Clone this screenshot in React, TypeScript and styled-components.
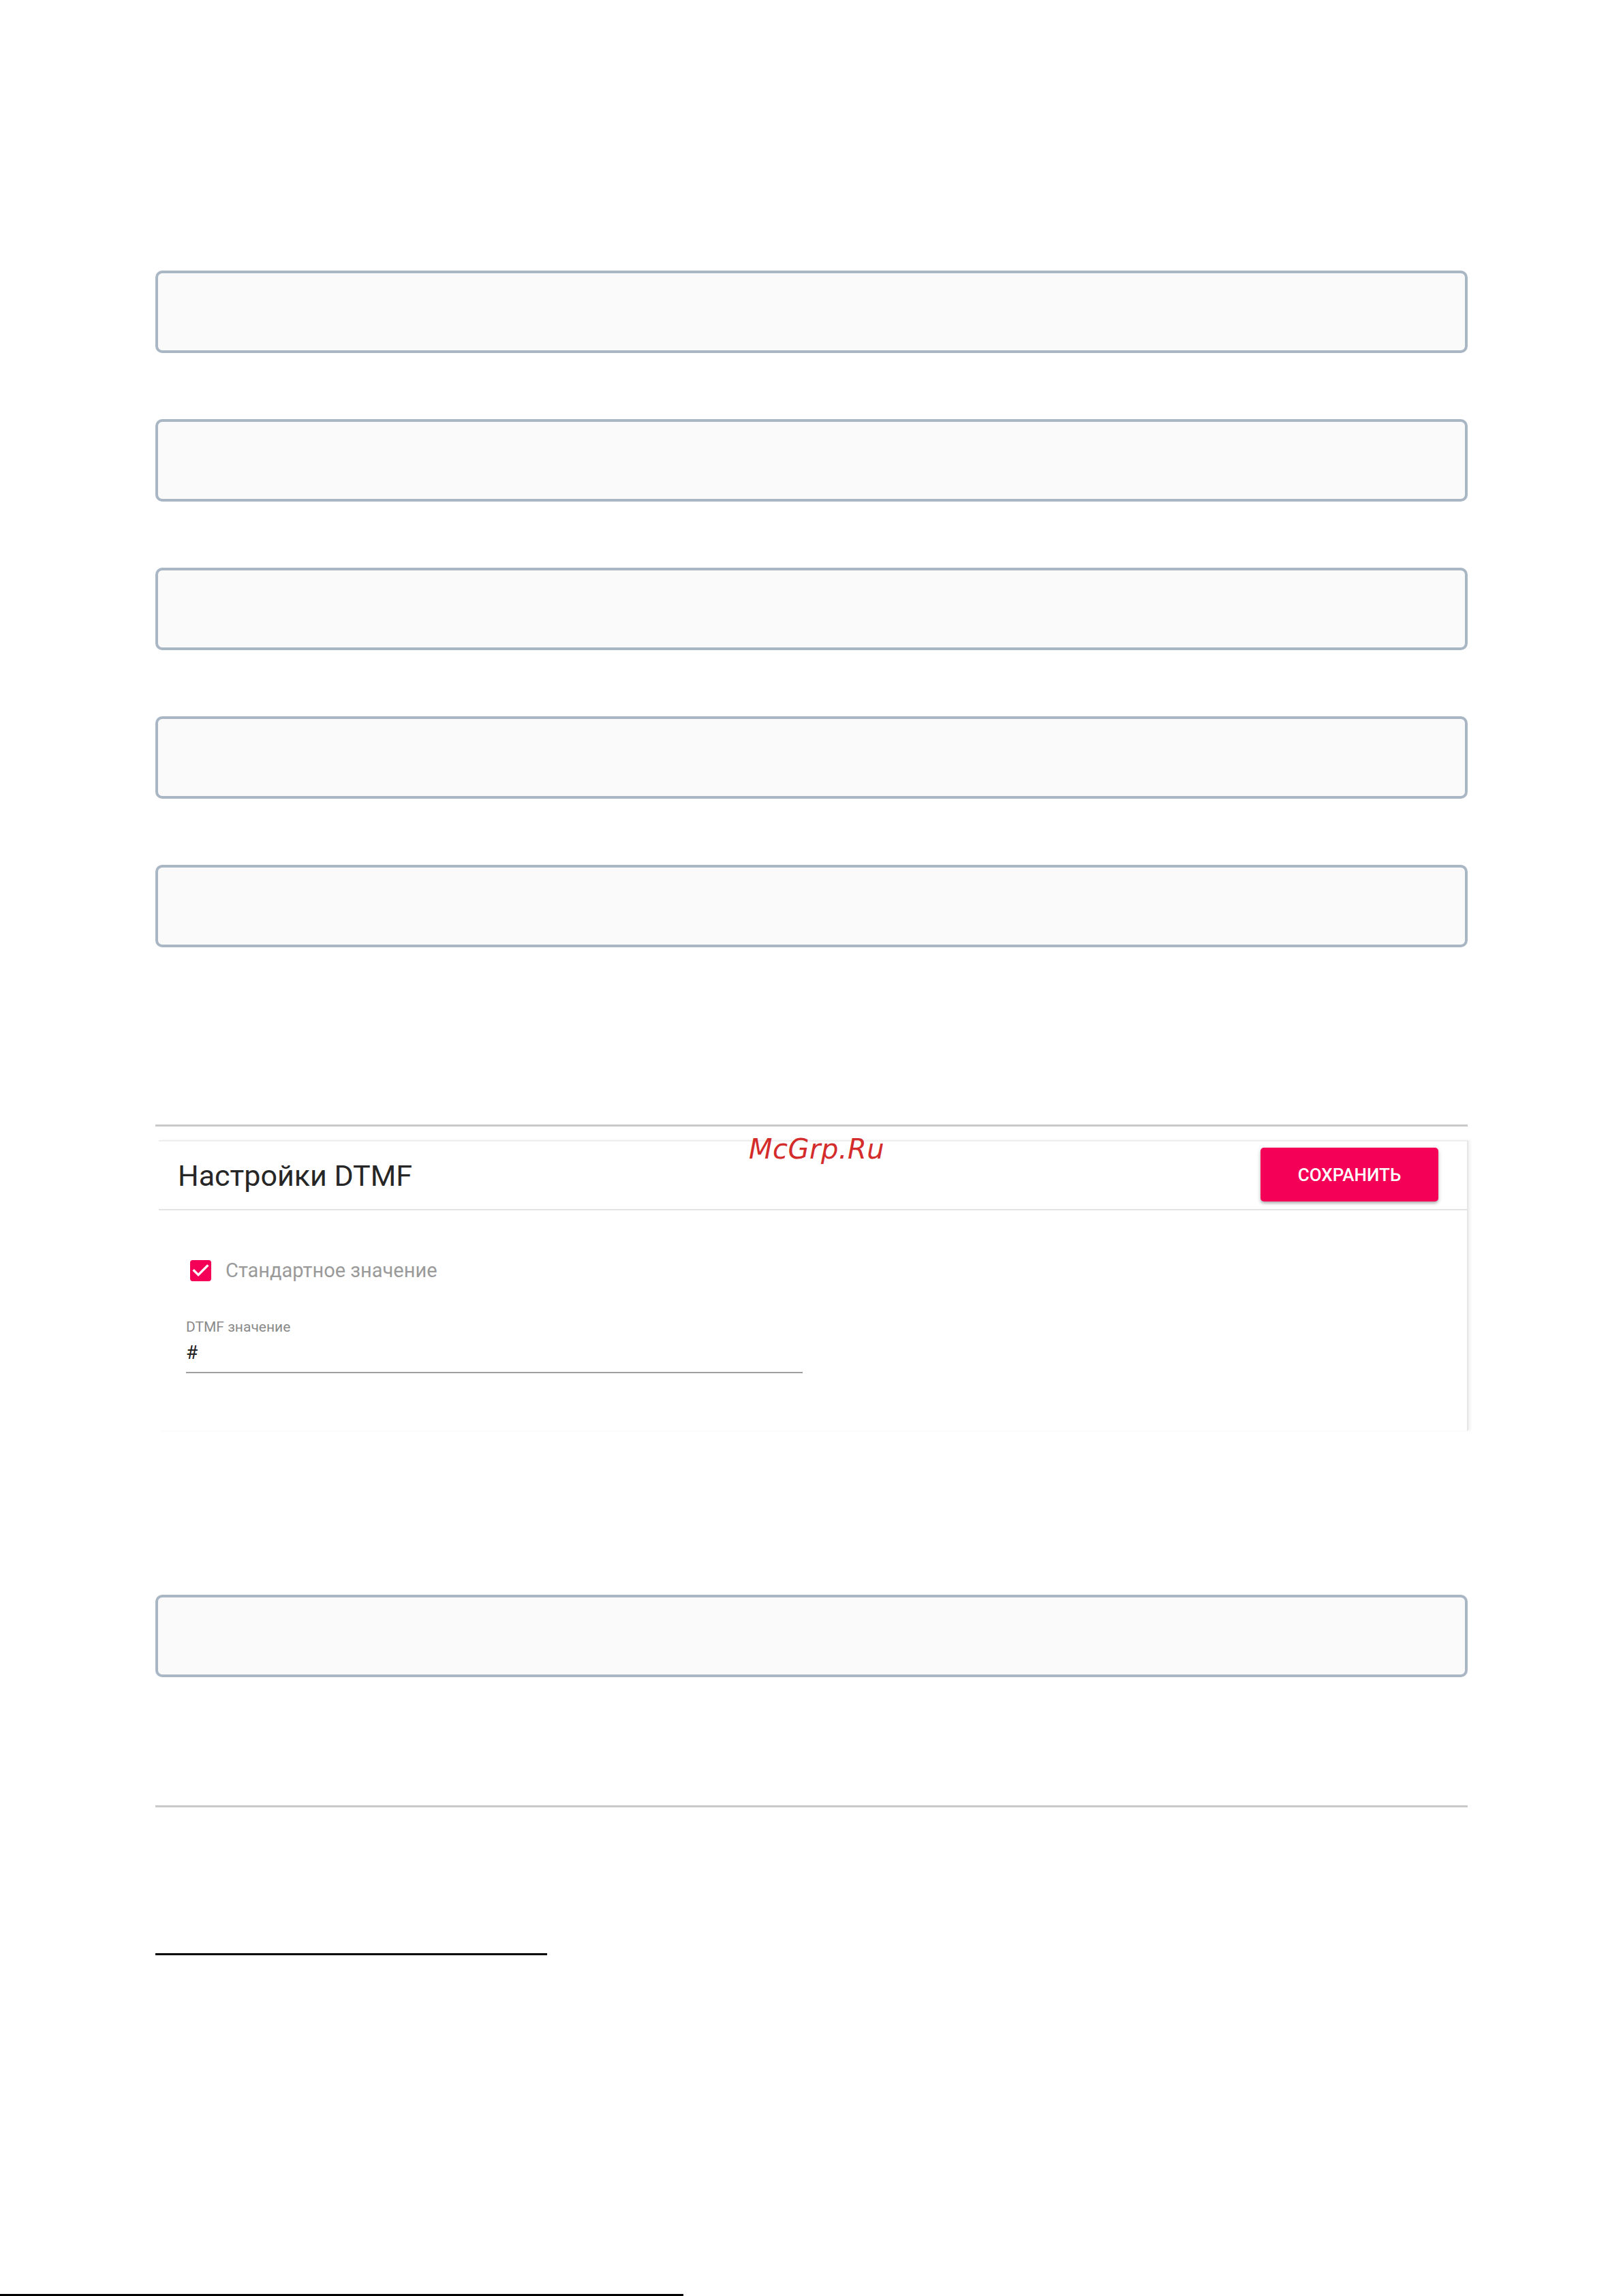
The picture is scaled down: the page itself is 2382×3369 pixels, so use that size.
import React from "react";
import styled, { createGlobalStyle } from "styled-components";

const GlobalStyle = createGlobalStyle`
  html, body {
    margin: 0;
    padding: 0;
    background: #ffffff;
  }
  body {
    font-family: Roboto, "Liberation Sans", sans-serif;
  }
`;

const EMPTY_FIELDS = 5;

const App = () => {
  return (
    <Page>
      <GlobalStyle />
      <Content>
        <FieldStack>
          {Array.from({ length: EMPTY_FIELDS }).map((_, i) => (
            <EmptyField key={i} />
          ))}
        </FieldStack>

        <Rule $top={260} />

        <Card>
          <Watermark>McGrp.Ru</Watermark>
          <CardHeader>
            <Title>Настройки DTMF</Title>
            <SaveButton type="button">СОХРАНИТЬ</SaveButton>
          </CardHeader>
          <CardBody>
            <CheckRow>
              <CheckBox viewBox="3 3 18 18">
                <path d="M19 3H5c-1.11 0-2 .9-2 2v14c0 1.1.89 2 2 2h14c1.11 0 2-.9 2-2V5c0-1.1-.89-2-2-2zm-9 14l-5-5 1.41-1.41L10 14.17l7.59-7.59L19 8l-9 9z" />
              </CheckBox>
              <CheckLabel>Стандартное значение</CheckLabel>
            </CheckRow>
            <TextField>
              <FieldLabel>DTMF значение</FieldLabel>
              <FieldValue>#</FieldValue>
            </TextField>
          </CardBody>
        </Card>

        <LoneField />

        <Rule $top={188} />

        <FootnoteRule />
      </Content>
      <PageEdge />
    </Page>
  );
};

const Page = styled.div`
  display: flex;
  flex-direction: column;
  width: 2382px;
  height: 3369px;
  overflow: hidden;
  background: #ffffff;
`;

const Content = styled.div`
  display: flex;
  flex-direction: column;
  width: 1926px;
  padding-left: 228px;
`;

const FieldStack = styled.div`
  display: flex;
  flex-direction: column;
  gap: 97px;
  margin-top: 397px;
`;

const EmptyField = styled.div`
  box-sizing: border-box;
  height: 121px;
  width: 1926px;
  background: #fafafa;
  border: 4px solid #a9b7c5;
  border-radius: 10px;
`;

const LoneField = styled(EmptyField)`
  margin-top: 241px;
`;

const Rule = styled.div<{ $top: number }>`
  margin-top: ${(p) => p.$top}px;
  height: 3px;
  width: 1926px;
  background: #c9c9c9;
`;

const Card = styled.section`
  position: relative;
  box-sizing: border-box;
  margin: 20px 0 0 5px;
  width: 1922px;
  height: 426px;
  border-top: 2px solid #eeeeee;
  border-right: 2px solid #e6e6e6;
  box-shadow: 3px 0 4px rgba(0, 0, 0, 0.06);
  background: #ffffff;
  display: flex;
  flex-direction: column;
`;

const Watermark = styled.span`
  position: absolute;
  left: 866px;
  top: -9px;
  font-family: "DejaVu Sans", sans-serif;
  font-style: italic;
  font-size: 40px;
  line-height: 40px;
  color: #d42b2b;
  letter-spacing: 0.5px;
`;

const CardHeader = styled.header`
  box-sizing: border-box;
  display: flex;
  align-items: center;
  justify-content: space-between;
  height: 101px;
  padding: 0 42px 0 28px;
  border-bottom: 2px solid #e3e3e3;
`;

const Title = styled.h2`
  margin: 0;
  font-family: Roboto, sans-serif;
  font-weight: 400;
  font-size: 43px;
  color: #262626;
`;

const SaveButton = styled.button`
  width: 261px;
  height: 79px;
  border: none;
  border-radius: 5px;
  background: #f50057;
  color: #ffffff;
  font-family: Roboto, sans-serif;
  font-weight: 500;
  font-size: 26px;
  letter-spacing: 0;
  box-shadow: 0 2px 6px rgba(0, 0, 0, 0.22), 0 3px 3px rgba(0, 0, 0, 0.14);
  margin-top: -2px;
`;

const CardBody = styled.div`
  display: flex;
  flex-direction: column;
  padding: 71px 0 0 40px;
`;

const CheckRow = styled.label`
  display: flex;
  align-items: center;
  gap: 21px;
  padding-left: 6px;
`;

const CheckBox = styled.svg`
  width: 31px;
  height: 31px;
  fill: #f50057;
  flex-shrink: 0;
`;

const CheckLabel = styled.span`
  font-family: Roboto, sans-serif;
  font-size: 29px;
  color: #9a9a9a;
`;

const TextField = styled.div`
  display: flex;
  flex-direction: column;
  width: 905px;
  margin-top: 54px;
  border-bottom: 2px solid #9e9e9e;
`;

const FieldLabel = styled.span`
  font-family: Roboto, sans-serif;
  font-size: 21px;
  line-height: 24px;
  color: #8a8a8a;
`;

const FieldValue = styled.span`
  font-family: Roboto, sans-serif;
  font-size: 28px;
  line-height: 38px;
  color: #222222;
  padding: 7px 0 9px;
`;

const FootnoteRule = styled.div`
  margin-top: 214px;
  width: 575px;
  height: 3px;
  background: #000000;
`;

const PageEdge = styled.div`
  margin-top: auto;
  width: 1003px;
  height: 3px;
  background: #000000;
`;

export default App;
